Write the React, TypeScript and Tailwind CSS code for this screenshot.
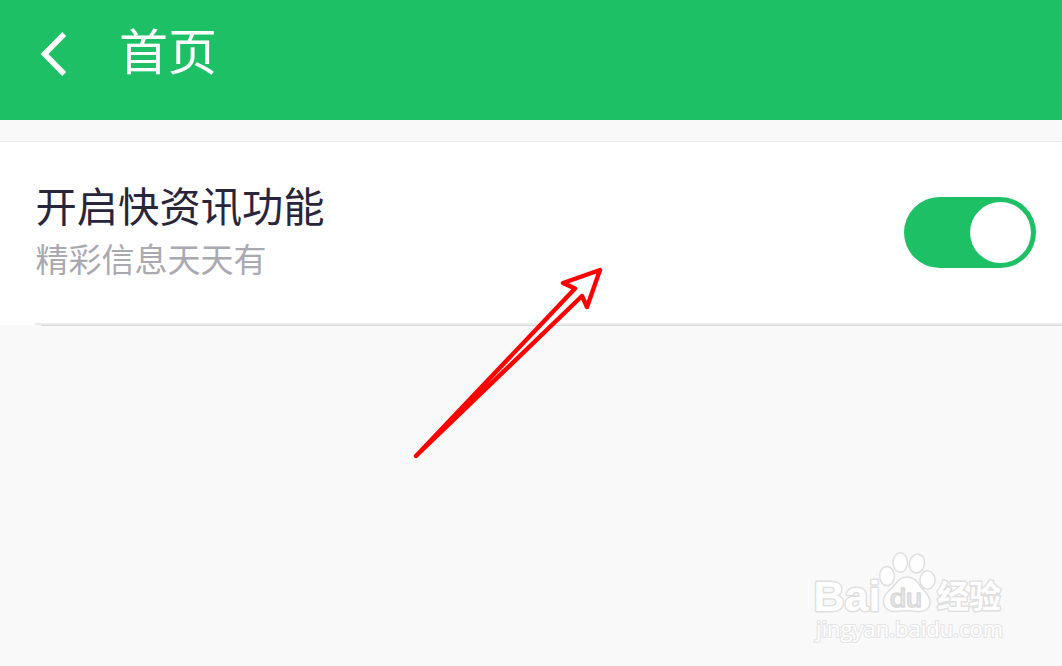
import React from "react";

function Header() {
  return (
    <header className="flex h-[120px] shrink-0 items-start bg-[#1dc065] text-white">
      <button aria-label="返回" className="ml-[38px] mt-[30px] h-12 w-8">
        <svg viewBox="0 0 32 48" className="h-12 w-8" fill="none" stroke="currentColor" strokeWidth="5.5">
          <path d="M26.2 4 L6.5 24 L26.2 44" />
        </svg>
      </button>
      <h1 className="ml-[49px] mt-[14px] text-[49px] leading-[70px] font-normal">首页</h1>
    </header>
  );
}

function Toggle() {
  return (
    <button
      role="switch"
      aria-checked="true"
      className="mr-[26px] mt-[55px] flex h-[71px] w-[132px] items-center justify-end rounded-full bg-[#1dc065] pr-[5px]"
    >
      <span className="size-[61px] rounded-full bg-white" />
    </button>
  );
}

function SettingRow() {
  return (
    <section className="h-[184px] border-t border-[#ececec] bg-white">
      <div className="flex h-[181px] items-start justify-between">
        <div className="ml-[35.5px] mt-[32px]">
          <h2 className="text-[41.3px] leading-[60px] font-normal text-[#29263b]">开启快资讯功能</h2>
          <p className="text-[33px] leading-[48px] text-[#aaa9b0]">精彩信息天天有</p>
        </div>
        <Toggle />
      </div>
      <div className="ml-[35px] h-[2px] bg-[#ececec]" />
      <div className="ml-[41px] h-px bg-[#d9d9d9]" />
    </section>
  );
}

function Arrow() {
  return (
    <svg className="pointer-events-none absolute left-[400px] top-[250px]" width="220" height="220" viewBox="0 0 220 220">
      <path
        d="M16 206 L175 38.5 L163 33 L200 20 L187 57 L182 46 Z"
        fill="white"
        stroke="#ff0000"
        strokeWidth="4.4"
        strokeLinejoin="round"
      />
    </svg>
  );
}

function Watermark() {
  return (
    <svg
      className="pointer-events-none absolute left-[800px] top-[540px]"
      width="220"
      height="110"
      viewBox="0 0 220 110"
      fill="#fefefe"
      stroke="#dfdfdf"
      strokeWidth="1.5"
      strokeLinejoin="round"
    >
      <g paintOrder="stroke" strokeWidth="2.8">
        <text x="13.5" y="70.5" fontSize="43" fontWeight="700" fontFamily="'Liberation Sans', sans-serif" textLength="67" lengthAdjust="spacingAndGlyphs">Bai</text>
        <text x="137" y="68" fontSize="32" fontWeight="700" fontFamily="'Noto Sans CJK SC', sans-serif" textLength="64" lengthAdjust="spacingAndGlyphs">经验</text>
        <text x="16" y="97" fontSize="21.5" strokeWidth="2.2" stroke="#e4e4e4" fontFamily="'Open Sans', sans-serif" fontWeight="400" textLength="187" lengthAdjust="spacingAndGlyphs">jingyan.baidu.com</text>
      </g>
      <ellipse cx="87" cy="36" rx="7.3" ry="9.6" />
      <ellipse cx="100.3" cy="22.5" rx="7.2" ry="9.7" />
      <ellipse cx="117" cy="23.5" rx="7.5" ry="9.5" transform="rotate(12 117 23.5)" />
      <ellipse cx="127.5" cy="40" rx="7.5" ry="9.2" />
      <path d="M107 37 C100 37 97 42 93 47 C88 52 83 55 83.5 62 C84 69 90 72 96 71.5 C103 70.5 110 70.5 117 71.5 C124 72.5 130 69 130 62 C130 55 125 52 121 47 C117 41 114 37 107 37 Z" />
      <text x="90" y="66.5" fontSize="26" fontWeight="400" fontFamily="'Liberation Sans', sans-serif" fill="#f9f9f9" stroke="#d8d8d8" strokeWidth="1.6" textLength="32" lengthAdjust="spacingAndGlyphs">du</text>
    </svg>
  );
}

export default function App() {
  return (
    <main className="relative flex h-screen w-full flex-col overflow-hidden bg-[#f9f9f9] font-['Noto_Sans_CJK_SC',sans-serif]">
      <Header />
      <div className="h-[21px] shrink-0" />
      <SettingRow />
      <Arrow />
      <Watermark />
    </main>
  );
}
